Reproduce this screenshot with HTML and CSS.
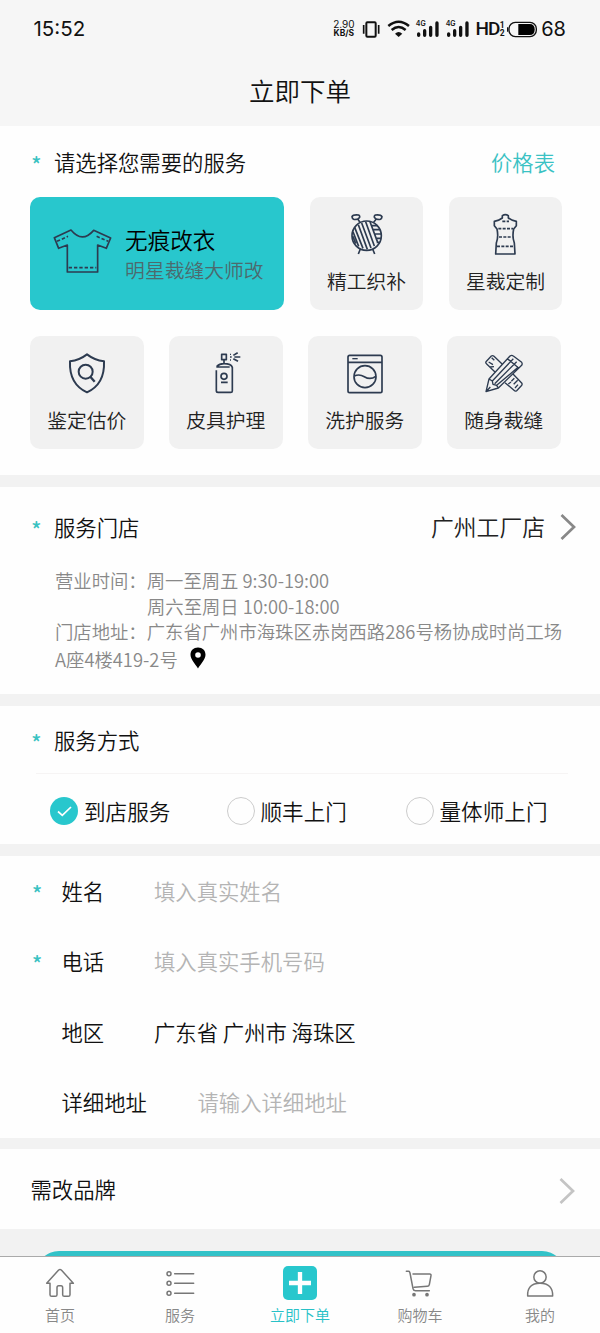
FILE: index.html
```html
<!DOCTYPE html>
<html lang="zh-CN">
<head>
<meta charset="utf-8">
<title>立即下单</title>
<link rel="stylesheet" href="styles.css">
</head>
<body>
<div class="app">
  <div class="status">
    <span class="clock">15:52</span>
    <div class="status-right">
      <div class="speed"><span>2.90</span><b>KB/S</b></div>
      <svg class="vib" viewBox="128 55 56 60"><rect x="141" y="65" width="28" height="43" rx="3" fill="none" stroke="#111" stroke-width="6"/><path d="M133 73v26M178 73v26" stroke="#111" stroke-width="5"/></svg>
      <svg class="wifi" viewBox="200 55 70 60" fill="none" stroke="#111" stroke-width="7.5"><path d="M204 76Q235 50 266 76M214 88Q235 70 256 88"/><path d="M224 99Q235 89 246 99L235 109Z" fill="#111" stroke="none"/></svg>
      <div class="signal"><span>4G</span><svg viewBox="288 55 70 60" stroke="#111" stroke-width="10" stroke-linecap="round"><path d="M296 100v4M314 90v14M332 80v24M351 67v37"/></svg></div>
      <div class="signal"><span>4G</span><svg viewBox="288 55 70 60" stroke="#111" stroke-width="10" stroke-linecap="round"><path d="M296 100v4M314 90v14M332 80v24M351 67v37"/></svg></div>
      <span class="hd">HD</span><div class="sim"><span>1</span><span>2</span></div>
      <svg class="battery" viewBox="557 55 96 60"><rect x="566" y="65" width="82" height="43" rx="19" fill="none" stroke="#111" stroke-width="4"/><path d="M562 80v13" stroke="#111" stroke-width="4"/><path d="M594 70h34q15 0 15 16.500t-15 16.500h-34z" fill="#000"/></svg>
      <span class="percent">68</span>
    </div>
  </div>
  <header class="title">立即下单</header>

  <section class="services">
    <div class="head"><i class="star">*</i><h2>请选择您需要的服务</h2><a class="price">价格表</a></div>
    <div class="row first">
      <div class="card active">
        <svg class="shirt" viewBox="97 122 184 144"><path d="M154 131Q188 172 222 132L273 155L260 186L234 176V257H143V176L117 186L104 154Z"/><path d="M112 165L145 150M231 150L266 165M147 244H230" stroke-dasharray="10 6"/></svg>
        <div><p class="name">无痕改衣</p><p class="desc">明星裁缝大师改</p></div>
      </div>
      <div class="card">
        <svg class="icon" viewBox="140 75 120 140"><circle cx="199" cy="152" r="44"/><path d="M179 112L172 102Q156 107 155 95Q158 88 175 90Q183 96 172 102M220 112L228 102Q244 107 245 95Q241 88 225 90Q217 96 228 102M180 192L174 207M217 192L223 207"/><path d="M174 119L201 193M184 114L212 189M196 110L222 183M209 110L232 172M163 127L188 190M158 140L175 184M214 122H231M217 134H240M221 147H242M225 160H242M229 172H237M157 153L166 176" stroke-width="5"/></svg>
        <span>精工织补</span>
      </div>
      <div class="card">
        <svg class="icon" viewBox="560 75 120 140"><path d="M609 92Q618 86 627 92V99Q636 106 651 109V122L643 132Q638 156 645 174L647 207H589L591 174Q598 156 593 132L585 122V109Q600 106 609 99Z"/><path d="M609 109H629M597 131H641M599 156H639M593 184H645" stroke-dasharray="9 4"/></svg>
        <span>星裁定制</span>
      </div>
    </div>
    <div class="row">
      <div class="card">
        <svg class="icon bold" viewBox="140 75 120 140"><path d="M200 91Q222 108 251 112Q254 180 200 205Q146 180 149 112Q178 108 200 91Z"/><circle cx="196" cy="143" r="21"/><path d="M210 158L223 173" stroke-width="7"/></svg>
        <span>鉴定估价</span>
      </div>
      <div class="card">
        <svg class="icon" viewBox="560 75 120 140"><path d="M607 91H621V107H607ZM614 107V119M592 128Q600 119 614 119Q635 119 639 130V201Q639 205 634 205H596Q591 205 591 200V139M591 129H631M605 175H625"/><circle cx="614" cy="157" r="9"/><path d="M642 94L655 86M645 99H663M642 104L656 112"/><path d="M632 99H637M632 91H635M632 108H635" stroke-width="4"/></svg>
        <span>皮具护理</span>
      </div>
      <div class="card">
        <svg class="icon" viewBox="135 75 120 140"><rect x="144" y="94" width="102" height="112" rx="5"/><path d="M144 115H246"/><path d="M157 104H173" stroke-width="4"/><circle cx="195" cy="158" r="33"/><path d="M163 156Q178 149 193 158Q211 169 227 157"/></svg>
        <span>洗护服务</span>
      </div>
      <div class="card">
        <svg class="icon thin" viewBox="552 75 120 140"><path d="M558 203L567 165L630 96Q635 92 640 96L665 115Q668 119 665 124L595 192ZM567 165L577 171L579 181L590 184L595 192M577 171L640 104M584 179L650 113M590 184L655 129M622 104L656 132M558 203L571 189"/><path d="M607 121L582 97Q578 93 574 96L558 113Q556 117 560 120L585 144M575 101L583 109M566 114L579 122M570 129L582 128M639 150L665 177Q668 181 664 185L650 200Q646 203 642 199L615 176M653 169L641 181M643 163L634 172M654 182L645 192M625 180L633 174"/></svg>
        <span>随身裁缝</span>
      </div>
    </div>
  </section>

  <section class="store">
    <div class="head"><i class="star">*</i><h2>服务门店</h2><span class="store-name">广州工厂店</span><svg class="chev" viewBox="0 0 16 28"><path d="M1.500 2L14 14L1.500 26"/></svg></div>
    <div class="info">
      <p>营业时间：周一至周五 9:30-19:00</p>
      <p class="indent">周六至周日 10:00-18:00</p>
      <p class="addr">门店地址：广东省广州市海珠区赤岗西路286号杨协成时尚工场</p>
      <p class="last">A座4楼419-2号<svg class="pin" viewBox="0 0 16 22"><path fill-rule="evenodd" d="M8 .5C3.500.5.500 3.600.500 7.700C.500 12.500 5.500 17 8 21.500C10.500 17 15.500 12.500 15.500 7.700C15.500 3.600 12.500.5 8 .5ZM8 5.200a2.800 2.800 0 1 1 0 5.600a2.800 2.800 0 1 1 0-5.600Z"/></svg></p>
    </div>
  </section>

  <section class="method">
    <div class="head"><i class="star">*</i><h2>服务方式</h2></div>
    <div class="options">
      <label><span class="radio on"><svg viewBox="0 0 28 28"><path d="M8 14.500L12.300 18.300L21 10"/></svg></span>到店服务</label>
      <label><span class="radio"></span>顺丰上门</label>
      <label><span class="radio"></span>量体师上门</label>
    </div>
  </section>

  <section class="form">
    <div class="field"><i class="star">*</i><span class="key">姓名</span><span class="hint">填入真实姓名</span></div>
    <div class="field"><i class="star">*</i><span class="key">电话</span><span class="hint">填入真实手机号码</span></div>
    <div class="field"><i class="star"></i><span class="key">地区</span><span>广东省 广州市 海珠区</span></div>
    <div class="field"><i class="star"></i><span class="key wide">详细地址</span><span class="hint">请输入详细地址</span></div>
  </section>

  <section class="brand"><span>需改品牌</span><svg class="chev light" viewBox="0 0 16 28"><path d="M1.500 2L14 14L1.500 26"/></svg></section>

  <div class="submit-area"><div class="submit"></div></div>

  <nav class="tabs">
    <div class="tab"><svg viewBox="132 312 96 108"><path d="M140 370L176 330Q180 327 184 330L220 370H210V404Q210 409 205 409H193Q188 409 188 404V383Q188 377 183 377H176Q171 377 171 383V404Q171 409 166 409H155Q150 409 150 404V370Z"/></svg><span>首页</span></div>
    <div class="tab"><svg viewBox="492 312 96 108"><circle cx="507" cy="341" r="6"/><circle cx="507" cy="370" r="6"/><circle cx="507" cy="400" r="6"/><path d="M524 341H581M524 370H581M524 400H581"/></svg><span>服务</span></div>
    <div class="tab current"><svg viewBox="-48 312 102 108"><rect x="-48" y="318" width="102" height="102" rx="15" fill="#28c7cd" stroke="none"/><path d="M3 336V402M-30 369H36" stroke="#fff" stroke-width="13"/></svg><span>立即下单</span></div>
    <div class="tab"><svg viewBox="311 312 96 108"><path d="M318 334H324Q328 334 329 339L338 386Q339 392 345 392H387M338 342H388Q393 342 392 347L387 374Q386 379 381 379L342 382"/><circle cx="341" cy="404" r="5.500" fill="#777" stroke="none"/><circle cx="380" cy="404" r="5.500" fill="#777" stroke="none"/></svg><span>购物车</span></div>
    <div class="tab"><svg viewBox="672 312 96 108"><circle cx="720" cy="351" r="18.500"/><path d="M683 408Q681 370 720 370Q759 370 758 408Z"/></svg><span>我的</span></div>
  </nav>
</div>
</body>
</html>
```
FILE: styles.css
```css
* { box-sizing: border-box; margin: 0; padding: 0; }
body { background: #f2f2f2; }
.app {
  width: 600px; height: 1333px; overflow: hidden;
  display: flex; flex-direction: column;
  font-family: "Noto Sans CJK SC", sans-serif;
  font-weight: 350; font-size: 21.35px; line-height: 30px; color: #111;
  white-space: nowrap;
}
svg { display: block; flex: none; }
section { background: #fefefe; margin-bottom: 12px; flex: none; }
h2 { font-size: inherit; font-weight: inherit; }

.status {
  height: 57px; padding: 0 34px 0 33.500px; background: #f6f6f6; flex: none;
  display: flex; justify-content: space-between; align-items: center;
  font-family: Inter, sans-serif; font-weight: 400; color: #111;
}
.clock { font-size: 20.500px; }
.status-right { display: flex; align-items: center; }
.speed { width: 23px; margin-right: 7px; font-size: 10px; line-height: 9px; text-align: center; }
.speed span, .speed b { display: block; }
.speed b { font-size: 8.500px; }
.vib { width: 18.7px; height: 20px; margin-right: 5.500px; }
.wifi { width: 23.3px; height: 20px; margin-right: 6px; }
.signal { position: relative; margin-right: 6.500px; }
.signal svg { width: 23.3px; height: 20px; }
.signal span { position: absolute; left: 0; top: 1px; font-size: 7px; line-height: 7px; font-weight: 600; }
.hd { font-family: Roboto, sans-serif; font-size: 19px; font-weight: 500; letter-spacing: -.8px; }
.sim { width: 6px; margin-right: .5px; font-family: Roboto, sans-serif; font-size: 8.500px; line-height: 8px; font-weight: 700; }
.sim span { display: block; }
.battery { width: 32px; height: 20px; margin-right: 3px; }
.percent { font-size: 20px; }

.title {
  height: 69px; flex: none; background: #f6f6f6;
  font-size: 25.5px; line-height: 66px; text-align: center;
}

.head { display: flex; align-items: center; }
.star {
  width: 22px; flex: none; font-style: normal; font-size: 21px; font-weight: 500;
  color: #3ac2c2; line-height: 26px; height: 22px;
}
.head .star { margin-left: -.7px; width: 22.700px; }
.services { height: 349px; padding: 21px 30px 0 32px; }
.price { margin-left: auto; margin-right: 15px; color: #3ac2c4; }
.row { display: flex; gap: 25.5px; margin: 26px 0 0 -2px; }
.row.first { margin-top: 20px; gap: 26px; }
.card {
  width: 113.500px; height: 113px; border-radius: 10px; background: #f1f1f1; flex: none;
  display: flex; flex-direction: column; align-items: center; padding-top: 13px;
  font-size: 19.800px; line-height: 28px; color: #222;
}
.row.first .card { width: 113px; }
.card > svg { fill: none; stroke: #2d3b50; stroke-width: 5; stroke-linejoin: round; }
.icon { width: 40px; height: 46.700px; margin-bottom: 10px; }
.card > .bold { stroke-width: 6; }
.card > .thin { stroke-width: 4; }
.row.first .card.active { width: 254px; background: #28c7cd; flex-direction: row; padding: 3px 0 0 22px; }
.shirt { width: 61.300px; height: 48px; margin: -9px 11.500px 0 .3px; }
.name { font-size: 22.600px; line-height: 30px; color: #000; }
.desc { line-height: 30px; color: #4c6a6e; }

.store { height: 207px; padding: 25px 24px 0 32px; }
.store-name { margin-left: auto; margin-right: 15px; font-size: 22.800px; color: #222; }
.chev { width: 16px; height: 28px; fill: none; stroke: #888; stroke-width: 2.700; }
.light { stroke: #c4c4c4; }
.info { padding: 25px 0 0 23px; font-size: 18.350px; line-height: 26px; color: #888; }
.indent { padding-left: 92px; }
.addr { line-height: 25px; }
.last { display: flex; align-items: center; line-height: 30px; }
.pin { width: 16px; height: 22px; margin: -2px 0 0 12px; fill: #000; }

.method { height: 138px; padding: 19px 32px 0; }
.options {
  border-top: 1px solid #f6f4f4; margin: 18px 0 0 4px; height: 74px; padding-left: 14px;
  display: flex; align-items: center; font-size: 21.600px;
}
.options label { display: flex; align-items: center; width: 176.500px; flex: none; }
.options label:nth-child(2) { width: 179px; }
.radio { width: 28px; height: 28px; border: 1px solid #ccc; border-radius: 50%; margin-right: 6px; }
.radio.on { background: #28c7cd; border: 0; }
.radio path { fill: none; stroke: #fff; stroke-width: 1.700; }

.form { height: 282px; margin-bottom: 11px; padding: 0 32px; }
.field { display: flex; align-items: center; height: 70.300px; }
.field .star { width: 29.500px; }
.key { width: 92.500px; }
.key.wide { width: 136px; }
.hint { color: #b4b4b4; }

.brand { height: 80px; margin: 0; padding: 0 25px 0 30.500px; display: flex; align-items: center; justify-content: space-between; }
.brand .chev { margin-top: 4px; }
.submit-area { height: 27px; flex: none; padding: 22px 35px 0 36px; overflow: hidden; }
.submit { height: 46px; border-radius: 23px; background: #32c2c8; }
.tabs { flex: none; height: 77px; border-top: 1px solid #aaa; background: #fefefe; display: flex; }
.tab {
  flex: 1; display: flex; flex-direction: column; align-items: center; padding-top: 7px;
  font-size: 15px; line-height: 22px; color: #888;
}
.tab svg { width: 32px; height: 36px; fill: none; stroke: #777; stroke-width: 4.500; stroke-linecap: round; stroke-linejoin: round; margin-bottom: 4px; }
.tab.current { color: #28c1c7; }
.tab.current svg { width: 34px; stroke-linecap: butt; }
```
